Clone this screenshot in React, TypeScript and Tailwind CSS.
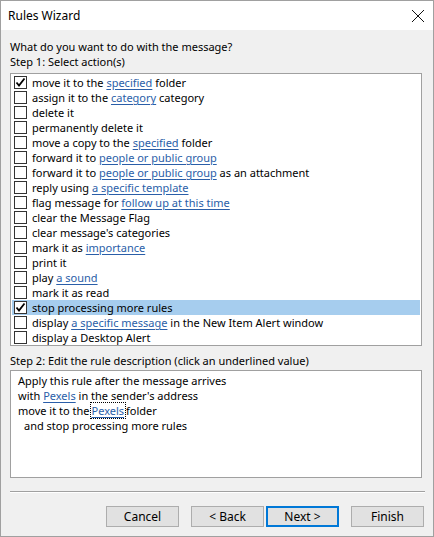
import React from 'react';

type Part = { t: string; link?: boolean };

const actions: { parts: Part[]; checked?: boolean; selected?: boolean }[] = [
  { parts: [{ t: 'move it to the ' }, { t: 'specified', link: true }, { t: ' folder' }], checked: true },
  { parts: [{ t: 'assign it to the ' }, { t: 'category', link: true }, { t: ' category' }] },
  { parts: [{ t: 'delete it' }] },
  { parts: [{ t: 'permanently delete it' }] },
  { parts: [{ t: 'move a copy to the ' }, { t: 'specified', link: true }, { t: ' folder' }] },
  { parts: [{ t: 'forward it to ' }, { t: 'people or public group', link: true }] },
  { parts: [{ t: 'forward it to ' }, { t: 'people or public group', link: true }, { t: ' as an attachment' }] },
  { parts: [{ t: 'reply using ' }, { t: 'a specific template', link: true }] },
  { parts: [{ t: 'flag message for ' }, { t: 'follow up at this time', link: true }] },
  { parts: [{ t: 'clear the Message Flag' }] },
  { parts: [{ t: "clear message's categories" }] },
  { parts: [{ t: 'mark it as ' }, { t: 'importance', link: true }] },
  { parts: [{ t: 'print it' }] },
  { parts: [{ t: 'play ' }, { t: 'a sound', link: true }] },
  { parts: [{ t: 'mark it as read' }] },
  { parts: [{ t: 'stop processing more rules' }], checked: true, selected: true },
  { parts: [{ t: 'display ' }, { t: 'a specific message', link: true }, { t: ' in the New Item Alert window' }] },
  { parts: [{ t: 'display a Desktop Alert' }] },
];

const Link = ({ children }: { children: React.ReactNode }) => (
  <span className="text-[#2a5ea8] underline underline-offset-2 decoration-[#2a5ea8]">{children}</span>
);

const Checkbox = ({ checked }: { checked?: boolean }) => (
  <div className="w-[13px] h-[13px] border border-[#333] bg-white flex items-center justify-center flex-shrink-0">
    {checked && (
      <svg width="11" height="11" viewBox="0 0 11 11">
        <path d="M1.5 5.5 L4 8.5 L9.5 1.5" fill="none" stroke="#000" strokeWidth="1.8" />
      </svg>
    )}
  </div>
);

const Button = ({ label, focused }: { label: string; focused?: boolean }) => (
  <button
    className={`w-[73px] h-[21px] bg-[#e1e1e1] text-[12px] text-black flex items-center justify-center ${
      focused ? 'border-2 border-[#0078d7]' : 'border border-[#adadad]'
    }`}
  >
    {label}
  </button>
);

export default function App() {
  return (
    <div
      className="w-[434px] h-[537px] bg-[#f0f0f0] border border-[#a0a0a0] flex flex-col text-[11px] text-black leading-[15px]"
      style={{ fontFamily: '"Noto Sans", "Segoe UI", sans-serif' }}
    >
      {/* Title bar */}
      <div className="h-[29px] bg-white flex items-center justify-between pl-[7px] pr-[6px] flex-shrink-0">
        <span className="text-[12px]">Rules Wizard</span>
        <svg width="14" height="14" viewBox="0 0 14 14" className="mr-[2px]">
          <path d="M1 1 L13 13 M13 1 L1 13" stroke="#111" strokeWidth="1" fill="none" />
        </svg>
      </div>

      <div className="flex flex-col px-[9px] pt-[9px]">
        <div className="h-[15px]">What do you want to do with the message?</div>
        <div className="h-[15px]">Step 1: Select action(s)</div>

        {/* Action list */}
        <div className="mt-[4px] w-[412px] h-[273px] bg-white border border-[#a0a0a0] px-[1px] pt-[1px]">
          {actions.map((a, i) => (
            <div
              key={i}
              className={`h-[15px] flex items-center gap-[5px] pl-[2px] whitespace-nowrap ${
                a.selected ? 'bg-[#a6cdee]' : ''
              }`}
            >
              <Checkbox checked={a.checked} />
              <span>
                {a.parts.map((p, j) => (p.link ? <Link key={j}>{p.t}</Link> : <span key={j}>{p.t}</span>))}
              </span>
            </div>
          ))}
        </div>

        <div className="mt-[7px] h-[15px]">Step 2: Edit the rule description (click an underlined value)</div>

        {/* Description */}
        <div className="mt-[2px] w-[412px] h-[108px] bg-white border border-[#a0a0a0] pl-[7px] pt-[2px]">
          <div className="h-[15px]">Apply this rule after the message arrives</div>
          <div className="h-[15px]">
            with <Link>Pexels</Link> in the sender's address
          </div>
          <div className="h-[15px]">
            move it to the
            <span className="outline outline-1 outline-dotted outline-black px-[1px] mx-[1px]">
              <Link>Pexels</Link>
            </span>
            folder
          </div>
          <div className="h-[15px] pl-[6px]">and stop processing more rules</div>
        </div>

        {/* Separator */}
        <div className="mt-[13px] w-[415px] border-t border-[#a0a0a0] border-b border-b-white" />

        <div className="flex justify-end gap-[12px] mt-[13px]">
          <Button label="Cancel" />
          <div className="flex gap-[2px]">
            <Button label="< Back" />
            <Button label="Next >" focused />
          </div>
          <Button label="Finish" />
        </div>
      </div>
    </div>
  );
}
